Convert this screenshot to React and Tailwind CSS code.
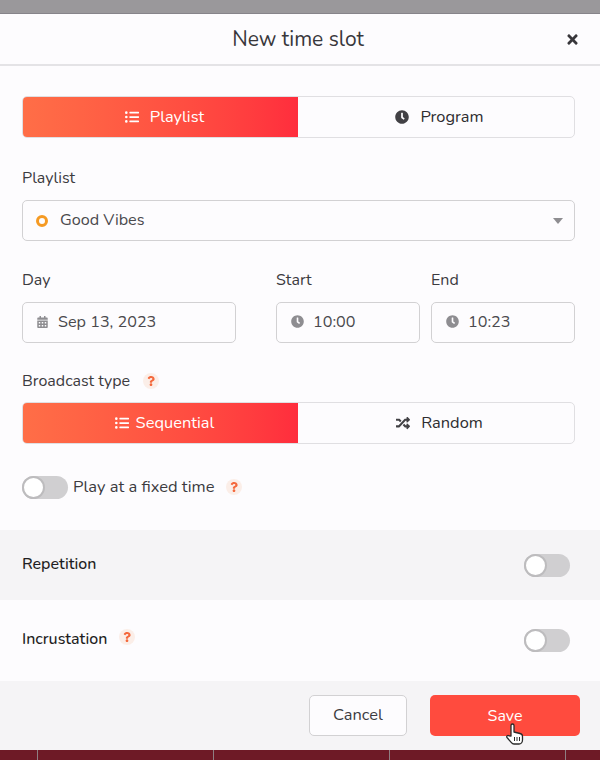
import React from "react";
import { FaListUl, FaClock, FaRandom, FaCalendarAlt, FaTimes, FaQuestion } from "react-icons/fa";

function Help({ className = "" }) {
  return (
    <span className={`flex h-4 w-4 items-center justify-center rounded-full bg-[#fbeee8] text-[#f4683c] ${className}`}>
      <FaQuestion className="h-[10px] w-[10px]" />
    </span>
  );
}

function Toggle() {
  return (
    <span className="flex h-[23px] w-[46px] shrink-0 items-center rounded-full bg-[#d0cfd1]">
      <span className="h-[23px] w-[23px] rounded-full border-2 border-[#bdbcbe] bg-white" />
    </span>
  );
}

function Segmented({ left, right, LeftIcon, RightIcon, leftGap, rightGap }) {
  return (
    <div className="flex h-[42px] overflow-hidden rounded-[5px] border border-[#e0dfe2] text-[16.4px]">
      <div className={`flex w-[275px] items-center justify-center bg-gradient-to-r from-[#ff6e47] to-[#ff2d3d] pl-[8px] text-white ${leftGap}`}>
        <LeftIcon className="h-[14px] w-[14px]" />
        <span>{left}</span>
      </div>
      <div className={`flex flex-1 items-center justify-center pl-[7px] text-[#2e2d30] ${rightGap}`}>
        <RightIcon className="h-[14px] w-[14px] text-[#424145]" />
        <span>{right}</span>
      </div>
    </div>
  );
}

function Field({ className = "", children }) {
  return (
    <div className={`flex h-[41px] items-center rounded-[5px] border border-[#d2d1d3] text-[16.2px] text-[#4a494d] ${className}`}>
      {children}
    </div>
  );
}

export default function App() {
  return (
    <div className="flex h-[760px] w-[600px] flex-col overflow-hidden bg-[#6e1a26] font-['Nunito','Noto_Sans','Open_Sans',sans-serif] text-[#3c3b3f]">
      <div className="h-[14px] border-b border-[#86848a] bg-[#9a989b]" />
      <div className="flex h-[736px] shrink-0 flex-col bg-[#fdfcfe]">
        <header className="relative flex h-[52px] shrink-0 items-center justify-center border-b-2 border-[#e4e3e6]">
          <h1 className="mr-[4px] mt-[1px] text-[21px] text-[#38373b]">New time slot</h1>
          <FaTimes className="absolute right-[20px] top-[18px] h-[15px] w-[15px] text-[#38373b]" />
        </header>

        <div className="flex h-[464px] shrink-0 flex-col pl-[22px] pr-[25px] pt-[30px]">
          <Segmented left="Playlist" right="Program" LeftIcon={FaListUl} RightIcon={FaClock} leftGap="gap-[11px]" rightGap="gap-[11px]" />

          <label className="mt-[30px] h-[20px] text-[16px] leading-[20px]">Playlist</label>
          <Field className="mt-[12px] pl-[13px] pr-[11px]">
            <span className="h-[12px] w-[12px] rounded-full border-[3px] border-[#f59a23]" />
            <span className="ml-[12px] flex-1">Good Vibes</span>
            <span className="h-0 w-0 border-x-[5px] border-t-[6px] border-x-transparent border-t-[#8e8d91]" />
          </Field>

          <div className="mt-[29px] flex">
            <div className="w-[214px]">
              <div className="h-[20px] text-[16px] leading-[20px]">Day</div>
              <Field className="mt-[12px] pl-[14px]">
                <FaCalendarAlt className="-mt-[2px] h-[12px] w-[11px] text-[#8e8d91]" />
                <span className="ml-[10px]">Sep 13, 2023</span>
              </Field>
            </div>
            <div className="ml-[40px] w-[144px]">
              <div className="h-[20px] text-[16px] leading-[20px]">Start</div>
              <Field className="mt-[12px] pl-[14px]">
                <FaClock className="-mt-[3px] h-[13px] w-[13px] text-[#8e8d91]" />
                <span className="ml-[9px]">10:00</span>
              </Field>
            </div>
            <div className="ml-[11px] w-[144px]">
              <div className="h-[20px] text-[16px] leading-[20px]">End</div>
              <Field className="mt-[12px] pl-[14px]">
                <FaClock className="-mt-[3px] h-[13px] w-[13px] text-[#8e8d91]" />
                <span className="ml-[9px]">10:23</span>
              </Field>
            </div>
          </div>

          <div className="mt-[28px] flex h-[20px] items-center text-[16px]">
            <span>Broadcast type</span>
            <Help className="ml-[13px]" />
          </div>
          <div className="mt-[11px]">
            <Segmented left="Sequential" right="Random" LeftIcon={FaListUl} RightIcon={FaRandom} leftGap="gap-[7px]" rightGap="gap-[11px]" />
          </div>

          <div className="mt-[31px] flex items-center text-[16.5px]">
            <Toggle />
            <span className="ml-[5px]">Play at a fixed time</span>
            <Help className="ml-[12px]" />
          </div>
        </div>

        <section className="flex h-[70px] shrink-0 items-center justify-between bg-[#f5f4f6] pl-[22px] pr-[30px] text-[16px] font-medium text-[#1f1e22]">
          <span className="-mt-[2px]">Repetition</span>
          <Toggle />
        </section>
        <section className="flex h-[81px] shrink-0 items-center justify-between pl-[22px] pr-[30px] text-[16px] font-medium text-[#1f1e22]">
          <span className="-mt-[4px] flex items-center">
            Incrustation
            <Help className="ml-[12px] -mt-[4px]" />
          </span>
          <Toggle />
        </section>

        <footer className="flex h-[69px] shrink-0 items-start justify-end bg-[#f5f4f6] pr-[20px] pt-[14px] text-[16px]">
          <button className="h-[41px] w-[98px] rounded-[5px] border border-[#d2d1d3] bg-[#fdfcfe] text-[16.4px] text-[#3c3b3f]">Cancel</button>
          <button className="relative ml-[23px] h-[41px] w-[150px] rounded-[5px] bg-[#ff4b3e] text-white">
            Save
            <svg className="absolute left-[75px] top-[27px] h-[24px] w-[20px]" viewBox="0 0 20 24">
              <path d="M6 14V3.500a1.500 1.500 0 0 1 3 0V10l6 1.500c1.500.4 2.500 1.500 2.500 3V18c0 2-1.500 4-3.500 4H9c-1.200 0-2-.6-2.800-1.600L2 15.500c-.9-1.200.8-2.800 2-1.600z" fill="#fff" stroke="#2a2a2a" strokeWidth="1.300" strokeLinejoin="round" />
              <path d="M9.500 15v4M12 15v4M14.500 15v4" stroke="#2a2a2a" strokeWidth="1" />
            </svg>
          </button>
        </footer>
      </div>
      <div className="flex h-[10px] shrink-0 pl-[37px]">
        <span className="w-[176px] shrink-0 border-l border-[#8f7f82]" />
        <span className="w-[176px] shrink-0 border-l border-[#8f7f82]" />
        <span className="w-[176px] shrink-0 border-l border-[#8f7f82]" />
        <span className="w-[35px] shrink-0 border-l border-[#8f7f82]" />
      </div>
    </div>
  );
}
